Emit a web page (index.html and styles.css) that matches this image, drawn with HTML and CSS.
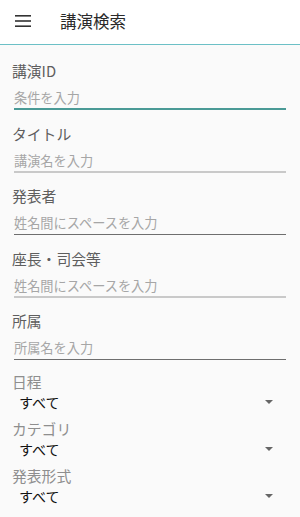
FILE: index.html
```html
<!DOCTYPE html>
<html lang="ja">
<head>
<meta charset="utf-8">
<link rel="stylesheet" href="styles.css">
</head>
<body>
<header class="appbar">
  <svg class="menu" width="16" height="12" viewBox="0 0 16 12"><rect x="0" y="0" width="16" height="1.6" fill="#333"/><rect x="0" y="5.2" width="16" height="1.6" fill="#333"/><rect x="0" y="10.4" width="16" height="1.6" fill="#333"/></svg>
  <h1 class="title">講演検索</h1>
</header>
<main class="form">
  <div class="field">
    <div class="label">講演ID</div>
    <div class="input focus">条件を入力</div>
  </div>
  <div class="field">
    <div class="label">タイトル</div>
    <div class="input light">講演名を入力</div>
  </div>
  <div class="field">
    <div class="label">発表者</div>
    <div class="input dark">姓名間にスペースを入力</div>
  </div>
  <div class="field">
    <div class="label">座長・司会等</div>
    <div class="input light">姓名間にスペースを入力</div>
  </div>
  <div class="field">
    <div class="label">所属</div>
    <div class="input dark">所属名を入力</div>
  </div>
  <div class="selects">
    <div class="select">
      <div class="slabel">日程</div>
      <div class="svalue"><span>すべて</span><i class="arrow"></i></div>
    </div>
    <div class="select">
      <div class="slabel">カテゴリ</div>
      <div class="svalue"><span>すべて</span><i class="arrow"></i></div>
    </div>
    <div class="select">
      <div class="slabel">発表形式</div>
      <div class="svalue"><span>すべて</span><i class="arrow"></i></div>
    </div>
  </div>
</main>
</body>
</html>
```
FILE: styles.css
```css
html, body {
  margin: 0;
  padding: 0;
}
body {
  width: 300px;
  height: 517px;
  overflow: hidden;
  background: #fafafa;
  font-family: "Noto Sans CJK JP", "Noto Sans", Roboto, sans-serif;
}
.appbar {
  height: 44px;
  background: #fff;
  border-bottom: 1px solid #6cc0c6;
  display: flex;
  align-items: center;
}
.menu {
  margin-left: 15px;
  margin-top: -2px;
}
.title {
  margin: -3px 0 0 29px;
  font-size: 16.5px;
  font-weight: 400;
  color: #2a2a2a;
  line-height: 20px;
}
.form {
  padding: 2.5px 14px 0 12px;
}
.field {
  margin-top: 13.5px;
  display: flex;
  flex-direction: column;
  gap: 7px;
}
.label {
  font-size: 14.8px;
  line-height: 20px;
  color: #5e5e5e;
}
.input {
  margin-left: 2px;
  font-size: 13.2px;
  line-height: 20px;
  color: #a6a6a6;
  border-bottom: 2px solid #c9c9c9;
}
.input.focus {
  border-bottom-color: #4a9a96;
}
.input.dark {
  border-bottom: 1px solid #6e6e6e;
  padding-bottom: 1px;
}
.selects {
  margin-top: 12px;
  display: flex;
  flex-direction: column;
  gap: 7px;
}
.slabel {
  font-size: 14.8px;
  line-height: 20px;
  color: #8e8e8e;
}
.svalue {
  display: flex;
  align-items: center;
  justify-content: space-between;
  padding-left: 7px;
  padding-right: 13px;
  font-size: 14px;
  line-height: 20px;
  color: #111;
}
.arrow {
  width: 0;
  height: 0;
  border-left: 4px solid transparent;
  border-right: 4px solid transparent;
  border-top: 4px solid #666;
}
```
